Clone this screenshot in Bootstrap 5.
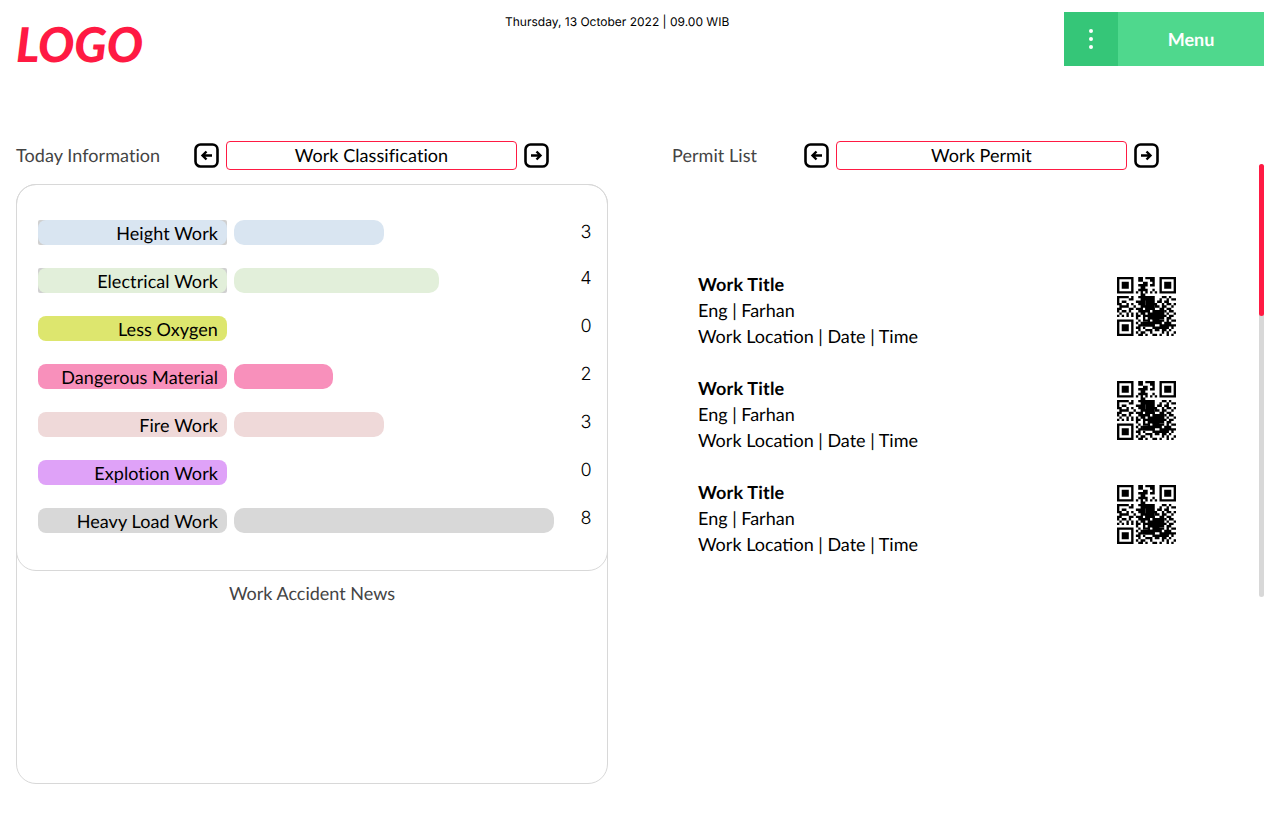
<!DOCTYPE html>
<html lang="en"><head><meta charset="utf-8"><title>Dashboard</title>
<link rel="stylesheet" href="https://cdn.jsdelivr.net/npm/bootstrap@5.3.0/dist/css/bootstrap.min.css">
<style>
body{font-family:"Lato",sans-serif;background:#fff;color:#000;height:832px;overflow:hidden;text-rendering:geometricPrecision}
.page-top{height:66px;padding:12px 16px 0}
.logo-word{font-weight:900;font-style:italic;font-size:48px;line-height:66px;color:#ff1a43;height:54px;width:489px;flex:none}
.date-line{font-family:"Inter",sans-serif;font-size:12px;line-height:20px;width:224px;text-align:center;white-space:nowrap;flex:none}
.menu-box{width:200px;height:54px;background:#4fd88d;color:#fff;font-size:18px;font-weight:700}
.menu-dots{width:54px;background:#35c678}
.menu-dots i{display:block;width:4px;height:4px;border-radius:50%;background:#fff;margin:2px 0}
.main-area{padding:75px 0 0 16px}
.left-pane{width:592px;flex:none}
.right-pane{margin-left:64px;width:592px;flex:none;position:relative}
.head-row{height:29px;font-size:18px;margin-bottom:14px;gap:7px}
.head-title{color:#444;flex:none;letter-spacing:.06px}
.title-left{width:171px}
.title-right{width:125px}
.sel-box{width:291px;height:29px;border:1px solid #ff1a43;border-radius:4px;text-align:center;line-height:27px;color:#000;flex:none;letter-spacing:.06px}
.arrow-ic{width:25px;height:25px;flex:none}
.outer-panel{height:600px;border:1px solid #d8d8d8;border-radius:20px}
.inner-panel{height:387px;margin:-1px;border:1px solid #d8d8d8;border-radius:20px;padding:35px 0 0 21px;position:relative}
.news-title{font-size:18px;color:#444;text-align:center;line-height:22px;margin-top:12px}
.stat-row{height:25px;margin-bottom:23px}
.stat-back{width:189px;height:25px;flex:none;background:#d0d0d0;border-radius:2px}
.stat-label{width:189px;height:25px;border-radius:8px;text-align:right;padding-right:9px;font-size:18px;line-height:27px;flex:none;letter-spacing:.08px}
.stat-bar{height:25px;border-radius:10px;margin-left:7px}
.stat-num{position:absolute;left:557px;width:24px;text-align:center;font-family:"Inter",sans-serif;font-weight:300;font-size:18px;line-height:22px}
.stat-num.first-num{margin-top:2px}
.c1{background:#d9e5f1}.c2{background:#e2efda}.c3{background:#dde66e}.c4{background:#f890bb}.c5{background:#efd9d9}.c6{background:#dfa2f8}.c7{background:#d8d8d8}
.permit-list{padding:87px 0 0 26px;width:504px}
.permit-item{height:104px;font-size:18px;line-height:26px}
.permit-item b{font-weight:700;letter-spacing:.2px}
.qr-code{width:59px;height:59px;margin-top:6px;flex:none}
.scroll-track{position:absolute;right:0;top:23px;width:5px;height:433px;background:#d8d8d8;border-radius:3px}
.scroll-thumb{height:152px;background:#ff1a43;border-radius:3px}
</style></head><body>
<svg width="0" height="0" class="position-absolute"><defs>
<symbol id="al" viewBox="0 0 25 25"><rect x="1.5" y="1.5" width="22" height="22" rx="5" fill="none" stroke="#000" stroke-width="2.6"/><path d="M18 12.5H9M12.5 8.5l-4 4 4 4" fill="none" stroke="#000" stroke-width="2.4"/></symbol>
<symbol id="ar" viewBox="0 0 25 25"><rect x="1.5" y="1.5" width="22" height="22" rx="5" fill="none" stroke="#000" stroke-width="2.6"/><path d="M7 12.5h9M12.5 8.5l4 4-4 4" fill="none" stroke="#000" stroke-width="2.4"/></symbol>
<symbol id="qr" viewBox="0 0 25 25">
<path fill="none" stroke="#000" d="M.5 .5h6v6h-6zM18.5 .5h6v6h-6zM.5 18.5h6v6h-6z"/>
<path d="M2 2h3v3H2zM20 2h3v3h-3zM2 20h3v3H2zM12 8h4v6h-4zM15 14h5v4h-5zM11 19h5v2h-5z"/>
<path fill="none" stroke="#000" d="M9 .5h2M12 .5h4M9 1.5h2M14 1.5h2M11 2.5h2M15 2.5h1M9 3.5h4M14 3.5h2M10 4.5h2M9 5.5h4M15 5.5h1M8 6.5h1M10 6.5h1M12 6.5h1M14 6.5h1M16 6.5h1M10 7.5h2M0 8.5h5M6 8.5h1M9 8.5h4M14 8.5h1M19 8.5h2M22 8.5h1M0 9.5h1M5 9.5h2M10 9.5h4M18 9.5h1M21 9.5h1M23 9.5h2M0 10.5h1M2 10.5h2M8 10.5h4M13 10.5h2M17 10.5h2M20 10.5h2M0 11.5h2M4 11.5h1M6 11.5h1M9 11.5h3M14 11.5h3M19 11.5h1M21 11.5h2M24 11.5h1M1 12.5h4M7 12.5h1M10 12.5h5M16 12.5h2M19 12.5h2M23 12.5h1M0 13.5h2M5 13.5h2M8 13.5h3M12 13.5h1M14 13.5h2M18 13.5h2M21 13.5h2M0 14.5h1M2 14.5h2M5 14.5h1M9 14.5h5M16 14.5h3M20 14.5h1M22 14.5h2M1 15.5h1M4 15.5h1M6 15.5h1M8 15.5h1M10 15.5h2M13 15.5h5M19 15.5h1M21 15.5h1M24 15.5h1M0 16.5h1M2 16.5h1M4 16.5h1M6 16.5h1M8 16.5h2M11 16.5h5M17 16.5h4M22 16.5h2M8 17.5h1M11 17.5h1M13 17.5h5M21 17.5h2M9 18.5h1M11 18.5h3M15 18.5h5M21 18.5h1M23 18.5h2M8 19.5h1M10 19.5h1M13 19.5h6M20 19.5h3M9 20.5h2M12 20.5h4M18 20.5h7M8 21.5h2M11 21.5h1M15 21.5h7M23 21.5h1M9 22.5h1M12 22.5h3M16 22.5h2M19 22.5h2M22 22.5h1M8 23.5h1M10 23.5h2M14 23.5h1M19 23.5h1M21 23.5h1M24 23.5h1M9 24.5h2M12 24.5h1M15 24.5h2M18 24.5h1M21 24.5h1M23 24.5h1"/>
</symbol>
</defs></svg>
<header class="page-top d-flex align-items-start">
<div class="logo-word">LOGO</div>
<div class="date-line">Thursday, 13 October 2022 | 09.00 WIB</div>
<div class="menu-box d-flex ms-auto"><div class="menu-dots d-flex flex-column align-items-center justify-content-center"><i></i><i></i><i></i></div><div class="flex-grow-1 d-flex align-items-center justify-content-center">Menu</div></div>
</header>
<main class="main-area d-flex">
<section class="left-pane">
<div class="head-row d-flex align-items-center"><span class="head-title title-left">Today Information</span>
<svg class="arrow-ic"><use href="#al"/></svg><div class="sel-box">Work Classification</div><svg class="arrow-ic"><use href="#ar"/></svg></div>
<div class="outer-panel">
<div class="inner-panel">
<div class="stat-row d-flex"><div class="stat-back"><div class="stat-label c1">Height Work</div></div><div class="stat-bar c1" style="width:150px"></div><span class="stat-num first-num">3</span></div>
<div class="stat-row d-flex"><div class="stat-back"><div class="stat-label c2">Electrical Work</div></div><div class="stat-bar c2" style="width:205px"></div><span class="stat-num">4</span></div>
<div class="stat-row d-flex"><div class="stat-label c3">Less Oxygen</div><span class="stat-num">0</span></div>
<div class="stat-row d-flex"><div class="stat-label c4">Dangerous Material</div><div class="stat-bar c4" style="width:99px"></div><span class="stat-num">2</span></div>
<div class="stat-row d-flex"><div class="stat-label c5">Fire Work</div><div class="stat-bar c5" style="width:150px"></div><span class="stat-num">3</span></div>
<div class="stat-row d-flex"><div class="stat-label c6">Explotion Work</div><span class="stat-num">0</span></div>
<div class="stat-row d-flex"><div class="stat-label c7">Heavy Load Work</div><div class="stat-bar c7" style="width:320px"></div><span class="stat-num">8</span></div>
</div>
<div class="news-title">Work Accident News</div>
</div>
</section>
<section class="right-pane">
<div class="head-row d-flex align-items-center"><span class="head-title title-right">Permit List</span>
<svg class="arrow-ic"><use href="#al"/></svg><div class="sel-box">Work Permit</div><svg class="arrow-ic"><use href="#ar"/></svg></div>
<div class="scroll-track"><div class="scroll-thumb"></div></div>
<div class="permit-list">
<div class="permit-item d-flex justify-content-between"><div><b>Work Title</b><br>Eng | Farhan<br>Work Location | Date | Time</div><svg class="qr-code"><use href="#qr"/></svg></div>
<div class="permit-item d-flex justify-content-between"><div><b>Work Title</b><br>Eng | Farhan<br>Work Location | Date | Time</div><svg class="qr-code"><use href="#qr"/></svg></div>
<div class="permit-item d-flex justify-content-between"><div><b>Work Title</b><br>Eng | Farhan<br>Work Location | Date | Time</div><svg class="qr-code"><use href="#qr"/></svg></div>
</div>
</section>
</main>
</body></html>
